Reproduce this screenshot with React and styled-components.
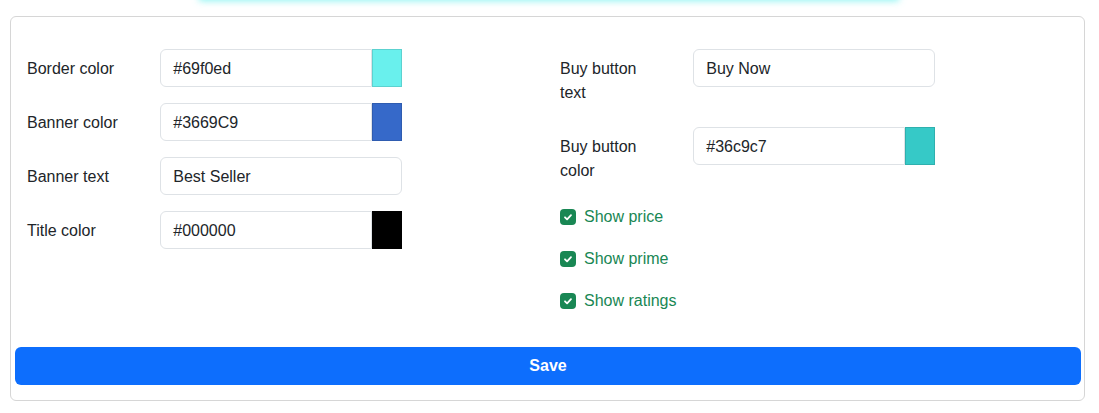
import React from 'react';
import styled, { createGlobalStyle } from 'styled-components';

const GlobalStyle = createGlobalStyle`
  body {
    margin: 0;
    background: #fff;
    font-family: "Liberation Sans", Arial, sans-serif;
    color: #212529;
    font-size: 16px;
    line-height: 24px;
  }
`;

const Page = styled.div`
  overflow: hidden;
`;

const PreviewGlow = styled.div`
  width: 698px;
  height: 20px;
  margin: -20px 0 0 200px;
  box-shadow: 0 0 7px 1px rgba(105, 240, 237, 0.75);
`;

const Card = styled.div`
  margin: 16px 14px 12px 10px;
  border: 1px solid #d6d6d6;
  border-radius: 6px;
  padding: 32px 3px 15px 4px;
`;

const Columns = styled.div`
  display: grid;
  grid-template-columns: 1fr 1fr;
  margin-bottom: 16px;
`;

const Column = styled.div`
  display: flex;
  flex-direction: column;
`;

const Row = styled.div`
  display: flex;
  margin-bottom: 16px;
`;

const Label = styled.label`
  flex: 0 0 25%;
  box-sizing: border-box;
  padding: 8px 28px 6px 12px;
  line-height: 24px;
`;

const Field = styled.div`
  flex: 0 0 calc(50% - 1px);
  box-sizing: border-box;
  padding: 0 12px;
  display: flex;
`;

const TextInput = styled.div`
  flex: 1;
  height: 38px;
  box-sizing: border-box;
  padding: 7px 12px 5px;
  border: 1px solid #dee2e6;
  border-radius: ${p => (p.$joined ? '6px 0 0 6px' : '6px')};
  color: #212529;
  line-height: 24px;
`;

const Swatch = styled.div`
  flex: 0 0 30px;
  height: 38px;
  box-sizing: border-box;
  background: ${p => p.$color};
  border: 1px solid rgba(0, 0, 0, 0.12);
`;

const CheckRow = styled.div`
  display: flex;
  align-items: center;
  gap: 8px;
  min-height: 24px;
  margin: 0 0 18px;
  padding-left: 12px;
  color: #198754;
`;

const CheckBox = styled.span`
  width: 16px;
  height: 16px;
  border-radius: 4px;
  background: #198754;
  display: flex;
  align-items: center;
  justify-content: center;
`;

const SaveButton = styled.button`
  display: block;
  width: 100%;
  height: 38px;
  border: none;
  border-radius: 6px;
  background: #0d6efd;
  color: #fff;
  font-family: inherit;
  font-size: 16px;
  font-weight: bold;
`;

function ColorField({ label, value, color }) {
  return (
    <Row>
      <Label>{label}</Label>
      <Field>
        <TextInput $joined>{value}</TextInput>
        <Swatch $color={color} />
      </Field>
    </Row>
  );
}

function TextField({ label, value }) {
  return (
    <Row>
      <Label>{label}</Label>
      <Field>
        <TextInput>{value}</TextInput>
      </Field>
    </Row>
  );
}

function Check({ children }) {
  return (
    <CheckRow>
      <CheckBox>
        <svg width="12" height="12" viewBox="0 0 20 20">
          <path d="M5 10.5l3.5 3.5L15 7" fill="none" stroke="#fff" strokeWidth="3" strokeLinecap="round" strokeLinejoin="round" />
        </svg>
      </CheckBox>
      {children}
    </CheckRow>
  );
}

export default function App() {
  return (
    <Page>
      <GlobalStyle />
      <PreviewGlow />
      <Card>
        <Columns>
          <Column>
            <ColorField label="Border color" value="#69f0ed" color="#69f0ed" />
            <ColorField label="Banner color" value="#3669C9" color="#3669C9" />
            <TextField label="Banner text" value="Best Seller" />
            <ColorField label="Title color" value="#000000" color="#000000" />
          </Column>
          <Column>
            <TextField label="Buy button text" value="Buy Now" />
            <ColorField label="Buy button color" value="#36c9c7" color="#36c9c7" />
            <Check>Show price</Check>
            <Check>Show prime</Check>
            <Check>Show ratings</Check>
          </Column>
        </Columns>
        <SaveButton>Save</SaveButton>
      </Card>
    </Page>
  );
}
